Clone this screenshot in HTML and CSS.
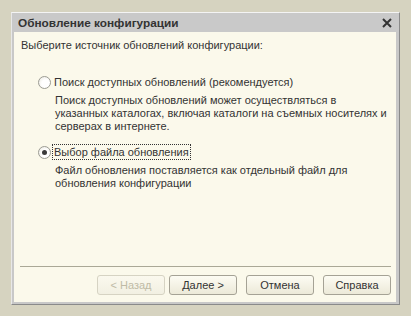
FILE: index.html
```html
<!DOCTYPE html>
<html lang="ru">
<head>
<meta charset="utf-8">
<link rel="stylesheet" href="styles.css">
</head>
<body>
<div class="dialog">
  <div class="titlebar">
    <span class="title">Обновление конфигурации</span>
    <svg class="close" width="10" height="10" viewBox="0 0 10 10"><path d="M1 1L9 9M9 1L1 9" stroke="#333" stroke-width="2" fill="none"/></svg>
  </div>
  <div class="content">
    <div class="prompt">Выберите источник обновлений конфигурации:</div>
    <div class="option">
      <div class="opt-row"><span class="radio"></span><span class="opt-label">Поиск доступных обновлений (рекомендуется)</span></div>
      <div class="desc">Поиск доступных обновлений может осуществляться в<br>указанных каталогах, включая каталоги на съемных носителях и<br>серверах в интернете.</div>
    </div>
    <div class="option second">
      <div class="opt-row"><span class="radio checked"></span><span class="opt-label focus">Выбор файла обновления</span></div>
      <div class="desc">Файл обновления поставляется как отдельный файл для<br>обновления конфигурации</div>
    </div>
    <div class="spacer"></div>
    <div class="sep"></div>
    <div class="buttons">
      <button class="btn disabled">&lt; Назад</button>
      <button class="btn next">Далее &gt;</button>
      <button class="btn">Отмена</button>
      <button class="btn">Справка</button>
    </div>
  </div>
</div>
</body>
</html>
```
FILE: styles.css
```css
html, body {
  margin: 0;
  padding: 0;
  background: #d6d3c0;
  height: 316px;
  overflow: hidden;
}
body {
  font-family: "Liberation Sans", Arial, sans-serif;
  font-size: 11px;
  color: #333;
}
.dialog {
  margin: 12px 0 0 11px;
  width: 389px;
  height: 293px;
  box-sizing: border-box;
  border-top: 1px solid #f4f4f4;
  border-left: 1px solid #e8e8e8;
  border-right: 1px solid #8a8a8a;
  border-bottom: 1px solid #8a8a8a;
  background: #c8c8c8;
  display: flex;
  flex-direction: column;
}
.titlebar {
  height: 19px;
  display: flex;
  align-items: center;
  justify-content: space-between;
  padding: 0 7px 0 6px;
  background: #c9c9c9;
}
.title {
  font-weight: bold;
  font-size: 11.8px;
  color: #333;
}
.close {
  display: block;
}
.content {
  flex: 1;
  margin: 0 3px 2px 2px;
  background: #fbf9eb;
  display: flex;
  flex-direction: column;
  padding: 7px 0 0 7px;
}
.prompt {
  line-height: 13px;
}
.option {
  margin: 22px 0 0 17px;
}
.option.second {
  margin-top: 11px;
}
.opt-row {
  display: flex;
  align-items: center;
  height: 16px;
}
.radio {
  width: 11px;
  height: 11px;
  border: 1px solid #9c9c94;
  border-radius: 50%;
  background: radial-gradient(circle at 60% 60%, #ffffff 40%, #e8e6dc 100%);
  margin-right: 1px;
  position: relative;
  flex: none;
}
.radio.checked::after {
  content: "";
  position: absolute;
  left: 3px;
  top: 3px;
  width: 5px;
  height: 5px;
  border-radius: 50%;
  background: #3a3a3a;
}
.opt-label {
  padding: 1px 1px;
  border: 1px dotted transparent;
}
.opt-label.focus {
  border-color: #333;
}
.desc {
  margin: 4px 0 0 17px;
  line-height: 13px;
  white-space: nowrap;
}
.spacer {
  flex: 1;
}
.sep {
  height: 1px;
  background: #aaa896;
  margin: 0 5px 0 -1px;
}
.buttons {
  display: flex;
  justify-content: flex-end;
  gap: 9px;
  padding: 8px 5px 7px 0;
}
.btn {
  width: 68px;
  height: 20px;
  box-sizing: border-box;
  border: 1px solid #a5a295;
  border-radius: 3px;
  background: linear-gradient(#fdfcf3, #ece9d8);
  font-family: "Liberation Sans", Arial, sans-serif;
  font-size: 11px;
  color: #333;
  padding: 0;
}
.btn.disabled {
  color: #bfbba6;
  border-color: #d6d3c3;
  background: linear-gradient(#fbf9ee, #f2f0e2);
  margin-right: -5px;
}
```
